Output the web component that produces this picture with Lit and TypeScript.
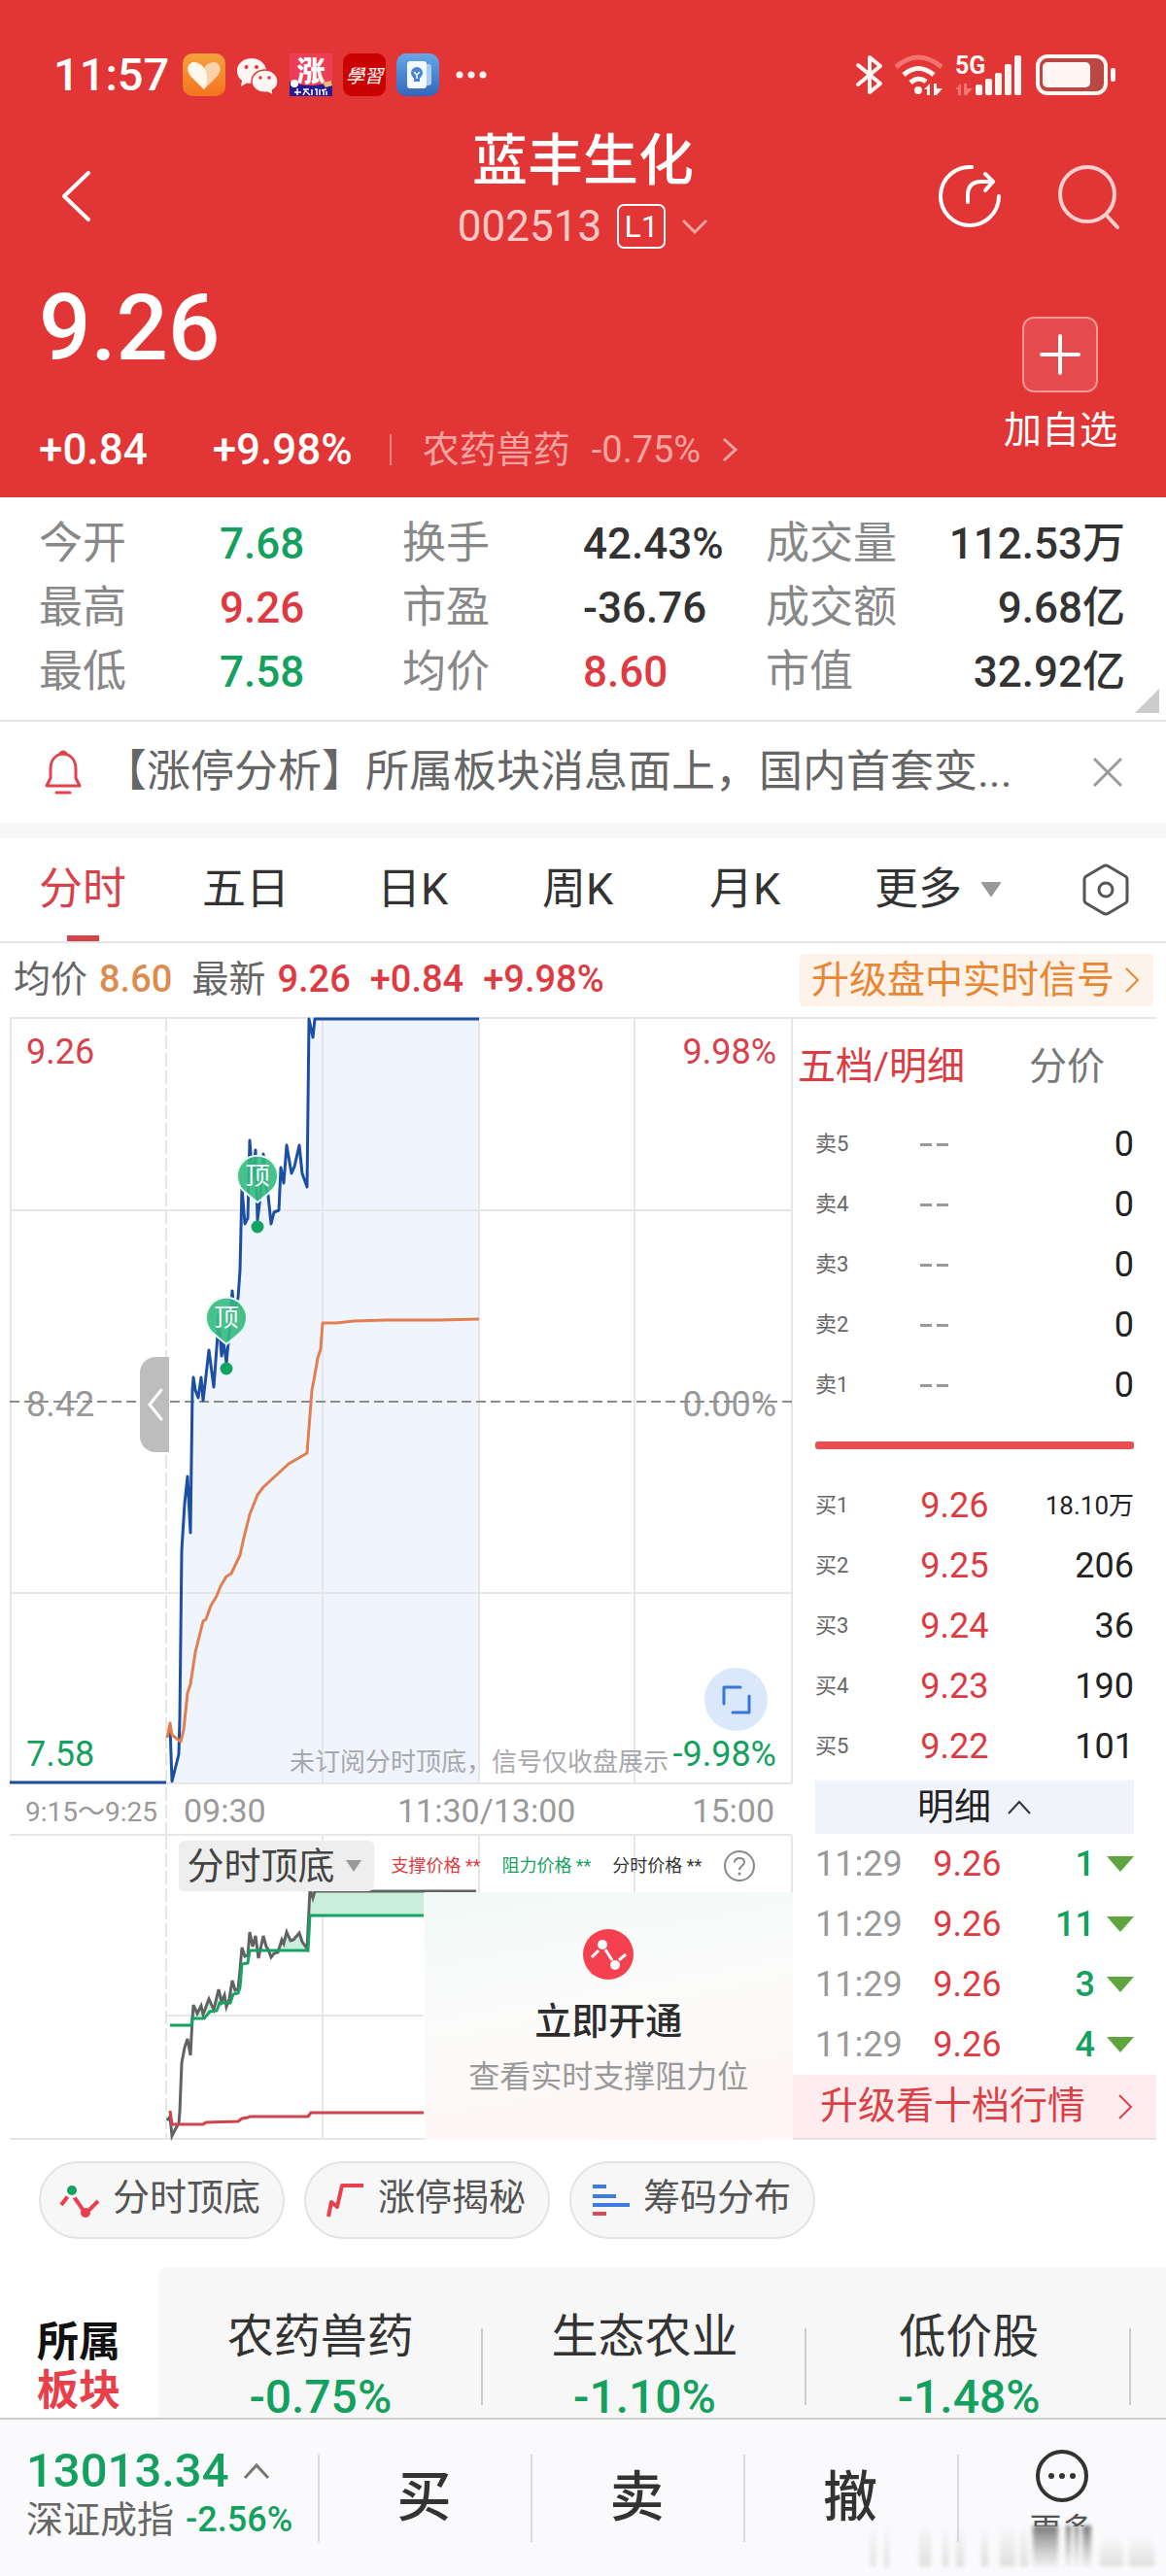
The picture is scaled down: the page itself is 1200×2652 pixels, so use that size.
import { LitElement, html, svg, css } from "lit";
import { customElement, property } from "lit/decorators.js";
import { classMap } from "lit/directives/class-map.js";

const base = css`
  :host {
    display: block;
    font-family: Roboto, "Noto Sans CJK SC", sans-serif;
    line-height: 1.2;
    color: #333;
  }
  * {
    box-sizing: border-box;
  }
  button,
  select {
    font: inherit;
    color: inherit;
    background: none;
    border: 0;
    padding: 0;
    margin: 0;
    cursor: pointer;
  }
  a {
    color: inherit;
    text-decoration: none;
  }
  svg {
    display: block;
    flex: none;
    overflow: visible;
  }
  table {
    width: 100%;
    border-collapse: collapse;
    table-layout: fixed;
  }
  th,
  td {
    padding: 0;
    font-weight: 400;
    text-align: left;
  }
  .up {
    color: #dd3a42;
  }
  .down {
    color: #14a05f;
  }
`;

const PRICE =
  "175,1776 177,1833 181,1817 184,1805 185,1768 187,1595 190,1547 193,1519 196,1577 198,1430 199,1417 201,1430 204,1438 207,1417 209,1441 215,1389 220,1427 224,1373 225,1353 228,1395 230,1380 233,1402 236,1370 239,1328 241,1350 245,1335 247,1307 249,1221 252,1259 255,1253 257,1173 260,1213 263,1183 265,1255 268,1230 271,1187 274,1223 276,1230 279,1259 282,1247 287,1245 289,1201 292,1217 295,1178 300,1207 303,1200 308,1178 311,1207 316,1221 318,1048 322,1067 324,1048 493,1048";
const AVERAGE =
  "172,1788 175,1773 177,1785 182,1789 186,1792 189,1780 193,1742 196,1733 201,1700 209,1668 212,1666 217,1652 223,1642 227,1632 233,1622 238,1619 247,1600 251,1582 257,1558 265,1538 271,1530 283,1519 297,1506 304,1502 316,1495 321,1430 323,1420 327,1397 330,1388 332,1361 346,1361 364,1359 398,1358 452,1358 493,1357";
const SIGNAL_PRICE =
  "172,2182 175,2178 177,2198 181,2190 184,2185 185,2173 187,2123 190,2107 193,2098 196,2115 198,2077 199,2063 203,2072 207,2064 209,2073 215,2057 220,2068 225,2047 228,2060 231,2053 233,2065 236,2057 239,2038 242,2048 245,2047 247,2027 249,2004 252,2013 255,2012 257,1988 260,2003 263,1992 266,2015 271,1992 274,2003 276,2006 279,2014 282,2010 286,2009 290,1996 292,2000 295,1988 299,1997 302,1996 308,1989 311,1998 316,2005 319,1944 322,1953 324,1946 490,1946";
const RESISTANCE =
  "175,2084 197,2084 198,2077 210,2077 216,2070 223,2069 226,2061 237,2061 240,2052 245,2051 247,2045 249,2021 255,2020 257,2007 317,2007 319,1971 436,1971";
const SUPPORT =
  "175,2172 177,2186 209,2186 212,2184 245,2183 249,2180 255,2179 257,2178 317,2178 320,2174 436,2174";

const pin = (x: number, y: number) => svg`
  <path d="M${x} ${y + 28} L${x - 12} ${y + 18} A21 21 0 1 1 ${x + 12} ${y + 18} Z"
    fill="#35ba80" fill-opacity="0.9" stroke="#e9fbf3" stroke-width="2"/>
  <text x=${x} y=${y + 9} class="pin">顶</text>
  <circle cx=${x} cy=${y + 53} r="6.5" fill="#10a362"/>`;

@customElement("intraday-chart")
export class IntradayChart extends LitElement {
  static styles = [
    base,
    css`
      .plot {
        width: 100%;
        height: auto;
      }
      .stack {
        display: grid;
      }
      .stack > * {
        grid-area: 1 / 1;
      }
      .grid {
        stroke: #e6e6e8;
        stroke-width: 2;
        fill: none;
      }
      text {
        font-size: 36px;
      }
      .axis {
        font-size: 34px;
        fill: #999;
      }
      .axis.small {
        font-size: 28px;
      }
      .mid {
        fill: #999;
      }
      .high {
        fill: #d8414b;
      }
      .low {
        fill: #14a05f;
      }
      .end {
        text-anchor: end;
      }
      .pin {
        font-size: 25px;
        fill: #fff;
        text-anchor: middle;
      }
      .remark {
        font-size: 26px;
        fill: #a8a8ac;
      }
      .controls {
        position: relative;
      }
      .handle {
        position: absolute;
        left: 17.6%;
        top: 41.5%;
        width: 30px;
        height: 98px;
        border-radius: 16px 0 0 16px;
        background: #bdbdbd;
        display: grid;
        place-items: center;
      }
      .expand {
        position: absolute;
        left: 88.9%;
        top: 79.5%;
        width: 65px;
        height: 65px;
        border-radius: 50%;
        background: #dbe7fb;
        display: grid;
        place-items: center;
      }
      .over {
        display: flex;
        flex-direction: column;
        align-items: flex-end;
      }
      .legend {
        width: 77.4%;
        height: 58px;
        padding-top: 4px;
        display: flex;
        align-items: center;
        font-size: 18px;
        white-space: nowrap;
      }
      .picker {
        width: 201px;
        height: 52px;
        background: #eee;
        border-radius: 6px;
        display: flex;
        align-items: center;
        padding-left: 8px;
        gap: 8px;
        margin-right: 17px;
      }
      .picker select {
        appearance: none;
        font-size: 38px;
        line-height: 52px;
        width: 156px;
        color: #444;
      }
      .legend span {
        margin-right: 22px;
      }
      .promo {
        width: 46.5%;
        flex: 1;
        display: flex;
        flex-direction: column;
        align-items: center;
        padding-top: 38px;
        background: linear-gradient(170deg, #f1f9f6 0%, #fbfbfa 45%, #fef5f4 100%);
      }
      .promo strong {
        font-size: 38px;
        line-height: 56px;
        font-weight: 500;
        margin-top: 15px;
        color: #2c2c2c;
      }
      .promo small {
        font-size: 32px;
        line-height: 48px;
        margin-top: 5px;
        color: #999;
      }
    `,
  ];

  render() {
    return html`
      <div class="stack">
        <svg class="plot" viewBox="0 1046 816 843" role="img" aria-label="分时走势">
          <polygon points="177,1834 ${PRICE} 493,1834" fill="#eff4fd" />
          <path class="grid" d="M10 1047H816M10 1245H815M10 1639H815M10 1835H815M10 1888H815M11 1047V1835M332 1047V1835M493 1047V1835M653 1047V1835M815 1047V1835" />
          <path class="grid" d="M171 1047V1888" stroke-dasharray="14 4" />
          <text class="mid" x="27" y="1457">8.42</text>
          <text class="mid end" x="799" y="1457">0.00%</text>
          <path d="M10 1442H815" stroke="#8c8c8c" stroke-width="2" stroke-dasharray="10 5" />
          <text class="high" x="27" y="1094">9.26</text>
          <text class="high end" x="799" y="1094">9.98%</text>
          <path d="M10 1834H171" stroke="#1d4d9b" stroke-width="3" />
          <polyline points=${PRICE} fill="none" stroke="#1c4fa3" stroke-width="3" stroke-linejoin="round" />
          <polyline points=${AVERAGE} fill="none" stroke="#e17f50" stroke-width="3" stroke-linejoin="round" />
          ${pin(265, 1209)} ${pin(233, 1355)}
          <text class="low" x="27" y="1817">7.58</text>
          <text class="remark" x="298" y="1822">未订阅分时顶底，信号仅收盘展示</text>
          <text class="low end" x="799" y="1817">-9.98%</text>
          <text class="axis small" x="26" y="1874">9:15～9:25</text>
          <text class="axis" x="189" y="1875">09:30</text>
          <text class="axis" x="409" y="1875">11:30/13:00</text>
          <text class="axis end" x="797" y="1875">15:00</text>
        </svg>
        <div class="controls">
          <button class="handle" aria-label="收起集合竞价">
            <svg width="20" height="36" viewBox="0 0 20 36"><path d="M17 3L5 18L17 33" fill="none" stroke="#fff" stroke-width="3" stroke-linecap="round" /></svg>
          </button>
          <button class="expand" aria-label="全屏">
            <svg width="32" height="32" viewBox="0 0 32 32"><path d="M20 3H3V20M12 29H29V12" fill="none" stroke="#3577d9" stroke-width="3" stroke-linejoin="round" stroke-linecap="round" /></svg>
          </button>
        </div>
      </div>
      <div class="stack">
        <svg class="plot" viewBox="0 1889 816 313" role="img" aria-label="分时顶底走势">
          <path class="grid" d="M10 2201H816M171 2074H436M332 1889V2201M493 1889V1947M653 1889V1950M815 1889V2201" />
          <path class="grid" d="M171 1889V2201" stroke-dasharray="14 4" />
          <polygon points="319,1971 320,1946 436,1946 436,1971" fill="#c9efdc" />
          <polygon points="286,2007 290,1996 295,1988 299,1997 302,1996 308,1989 311,1998 316,2007" fill="#c9efdc" />
          <polygon points="199,2063 209,2073 215,2057 220,2068 225,2047 233,2061 226,2061 216,2070 199,2077" fill="#c9efdc" />
          <polyline points=${SIGNAL_PRICE} fill="none" stroke="#606362" stroke-width="3" />
          <polyline points=${RESISTANCE} fill="none" stroke="#17a162" stroke-width="3" />
          <polyline points=${SUPPORT} fill="none" stroke="#cf434c" stroke-width="3" />
        </svg>
        <div class="over">
          <div class="legend">
            <label class="picker">
              <select aria-label="指标">
                <option>分时顶底</option>
              </select>
              <svg width="16" height="12" viewBox="0 0 16 12"><path d="M0 0H16L8 12Z" fill="#999" /></svg>
            </label>
            <span class="up">支撑价格 **</span>
            <span class="down">阻力价格 **</span>
            <span>分时价格 **</span>
            <button aria-label="说明">
              <svg width="34" height="34" viewBox="0 0 34 34">
                <g fill="none" stroke="#888" stroke-width="2">
                  <circle cx="17" cy="17" r="15" />
                  <path d="M12 13.500Q12 9 17 9T22 13.500C22 16.500 17 17 17 21" />
                </g>
                <circle cx="17" cy="25" r="1.500" fill="#888" />
              </svg>
            </button>
          </div>
          <button class="promo">
            <svg width="52" height="52" viewBox="0 0 52 52">
              <circle cx="26" cy="26" r="26" fill="#f5404f" />
              <path d="M9 29L16 22M23 21L30 32M37 32L44 26" stroke="#fff" stroke-width="3" />
              <circle cx="20" cy="16" r="5" fill="#fff" /><circle cx="33" cy="37" r="5" fill="#fff" />
            </svg>
            <strong>立即开通</strong>
            <small>查看实时支撑阻力位</small>
          </button>
        </div>
      </div>
    `;
  }
}

@customElement("order-book")
export class OrderBook extends LitElement {
  @property({ attribute: false }) bids: [string, string][] = [
    ["9.26", "18.10万"],
    ["9.25", "206"],
    ["9.24", "36"],
    ["9.23", "190"],
    ["9.22", "101"],
  ];
  @property({ attribute: false }) ticks: [string, string, string][] = [
    ["11:29", "9.26", "1"],
    ["11:29", "9.26", "11"],
    ["11:29", "9.26", "3"],
    ["11:29", "9.26", "4"],
  ];

  static styles = [
    base,
    css`
      :host {
        padding-right: 10px;
      }
      .tabs {
        display: flex;
        gap: 66px;
        height: 100px;
        padding-left: 5px;
        align-items: center;
        font-size: 39px;
        border-top: 2px solid #e6e6e8;
      }
      .tabs button {
        color: #777;
        white-space: nowrap;
      }
      .tabs button.up {
        color: #dd3a42;
      }
      .body {
        padding: 0 23px;
      }
      tr {
        height: 62px;
      }
      th,
      td {
        font-size: 36px;
        line-height: 62px;
        white-space: nowrap;
      }
      .book th {
        width: 33%;
        font-size: 22px;
        color: #666;
      }
      .book td:last-child {
        text-align: right;
        color: #222;
      }
      .book .compact {
        font-size: 26px;
      }
      .none {
        display: flex;
        height: 62px;
        align-items: center;
        gap: 5px;
      }
      .none i {
        width: 12px;
        height: 3px;
        background: #999;
      }
      .ratio {
        height: 8px;
        border-radius: 3px;
        background: #e8504f;
        margin: 27px 0;
      }
      .detail {
        width: 100%;
        height: 55px;
        margin-top: 4px;
        background: #f1f3fa;
        display: flex;
        align-items: center;
        justify-content: center;
        gap: 16px;
        font-size: 38px;
        color: #222;
      }
      .ticks .time {
        width: 37%;
        color: #999;
      }
      .ticks .qty {
        width: 34%;
        font-weight: 500;
      }
      .qty div {
        display: flex;
        justify-content: flex-end;
        align-items: center;
        gap: 12px;
      }
      .upgrade {
        height: 67px;
        display: flex;
        align-items: center;
        justify-content: space-between;
        padding: 0 24px 0 28px;
        background: #fdedee;
        color: #dc4047;
        font-size: 39px;
        white-space: nowrap;
        border-bottom: 2px solid #e6dfe0;
      }
    `,
  ];

  render() {
    return html`
      <div class="tabs">
        <button class="up">五档/明细</button>
        <button>分价</button>
      </div>
      <div class="body">
        <table class="book">
          <tbody>
            ${[5, 4, 3, 2, 1].map(
              (n) => html`<tr>
                <th scope="row">卖${n}</th>
                <td><span class="none"><i></i><i></i></span></td>
                <td>0</td>
              </tr>`
            )}
          </tbody>
        </table>
        <div class="ratio"></div>
        <table class="book">
          <tbody>
            ${this.bids.map(
              ([price, qty], i) => html`<tr>
                <th scope="row">买${i + 1}</th>
                <td class="up">${price}</td>
                <td class=${classMap({ compact: qty.length > 5 })}>${qty}</td>
              </tr>`
            )}
          </tbody>
        </table>
        <button class="detail">
          明细
          <svg width="26" height="16" viewBox="0 0 26 16"><path d="M2 14L13 2L24 14" fill="none" stroke="#333" stroke-width="2" /></svg>
        </button>
        <table class="ticks">
          <tbody>
            ${this.ticks.map(
              ([time, price, qty]) => html`<tr>
                <td class="time">${time}</td>
                <td class="up">${price}</td>
                <td class="qty down">
                  <div>${qty}<svg width="28" height="16" viewBox="0 0 28 16"><path d="M0 0H28L14 16Z" fill="#5da53c" /></svg></div>
                </td>
              </tr>`
            )}
          </tbody>
        </table>
      </div>
      <a class="upgrade" href="#level2">
        升级看十档行情
        <svg width="16" height="28" viewBox="0 0 16 28"><path d="M2 2L14 14L2 26" fill="none" stroke="#dc4047" stroke-width="2" /></svg>
      </a>
    `;
  }
}

const statusIcons = html`
  <svg width="44" height="46" viewBox="0 0 44 46">
    <defs><linearGradient id="o" x2="0" y2="1"><stop stop-color="#f6a13c" /><stop offset="1" stop-color="#f5741f" /></linearGradient></defs>
    <rect y="1" width="44" height="44" rx="10" fill="url(#o)" />
    <path d="M22 38L8 24C2 16 7 9 13 10Q19 11 22 16Q25 11 31 10C37 9 42 16 36 24Z" fill="#fbd3ab" />
    <path d="M22 38L8 24C2 16 7 9 13 10Q21 12 24 20Q27 28 22 38Z" fill="#fff6ec" />
  </svg>
  <svg width="44" height="46" viewBox="0 0 44 46">
    <path d="M16 6C7 6 1 12 1 19Q1 25 6 29L5 35L11 31.500Q32 34 31 18C30 11 24 6 16 6Z" fill="#fff5f3" />
    <path d="M30 18C22 18 16 23 16 30C16 37 23 42 32 41L38 44L37.500 39Q43 36 43 30C43 23 37 18 30 18Z" fill="#fff5f3" stroke="#e23535" stroke-width="1.500" />
    <g fill="#e23535"><circle cx="10.500" cy="15" r="2" /><circle cx="21" cy="15" r="2" /><circle cx="25" cy="26" r="1.700" /><circle cx="34" cy="26" r="1.700" /></g>
  </svg>
  <svg width="44" height="46" viewBox="0 0 44 46">
    <rect y="1" width="44" height="44" fill="#ee3d55" />
    <text x="22" y="30" font-size="29" font-weight="900" fill="#fff" text-anchor="middle">涨</text>
    <path d="M0 30Q22 38 44 30V45H0Z" fill="#271b8e" />
    <circle cx="5" cy="32" r="4" fill="#fff" /><path d="M34 31L43 29L44 34L37 36Z" fill="#f7ba77" />
    <path d="M5 41H12M8 37V44M14 38H20M17 38L14 44M17 40L21 44M23 38V44M26 38H28V44M31 38V44M33 39L38 38M35 38V44M38 40V44" stroke="#fff" stroke-width="1.500" fill="none" />
  </svg>
  <svg width="44" height="46" viewBox="0 0 44 46">
    <rect y="1" width="44" height="44" rx="9" fill="#cb0202" />
    <text x="22" y="31" font-size="19" font-style="italic" fill="#fff" text-anchor="middle" font-family="Liberation Serif, Noto Sans CJK TC, serif">學習</text>
  </svg>
  <svg width="44" height="46" viewBox="0 0 44 46">
    <defs><linearGradient id="b" x2="0" y2="1"><stop stop-color="#67a7e8" /><stop offset="1" stop-color="#3167bd" /></linearGradient></defs>
    <rect y="1" width="44" height="44" rx="10" fill="url(#b)" />
    <path d="M27 12H33Q36 12 36 15V31Q36 34 33 34H27Z" fill="#a7ccf5" />
    <rect x="11" y="9" width="20" height="28" rx="3" fill="#f4f9ff" />
    <circle cx="21" cy="21" r="6" fill="#4785d3" /><path d="M18 26H24V30H18Z" fill="#4785d3" />
    <path d="M18 20L21 23L24 20M21 23V27" stroke="#f4f9ff" stroke-width="1.500" fill="none" />
  </svg>
  <svg width="44" height="46" viewBox="0 0 44 46">
    <g fill="#fff3f1"><circle cx="10" cy="23" r="3.500" /><circle cx="22" cy="23" r="3.500" /><circle cx="34" cy="23" r="3.500" /></g>
  </svg>
`;

const radioIcons = html`
  <svg width="28" height="42" viewBox="0 0 28 42">
    <path d="M2 11L25 30L14 39V3L25 12L2 31" fill="none" stroke="#fff6f4" stroke-width="4" stroke-linejoin="round" stroke-linecap="round" />
  </svg>
  <svg width="52" height="42" viewBox="0 0 52 42" fill="none">
    <path d="M2 13Q25 -7 49 13" stroke="#f2736f" stroke-width="5" />
    <path d="M10 21Q25 8 41 21M17 29Q25 22 33 28" stroke="#fff6f4" stroke-width="5" />
    <circle cx="25" cy="37" r="4" fill="#fff6f4" />
    <path d="M31 36L37 30V42H34V36ZM41 30V42H44L50 35H44V30Z" fill="#fff6f4" />
  </svg>
  <svg width="72" height="42" viewBox="0 0 72 42">
    <text x="0" y="20" font-size="25" font-weight="700" fill="#fff6f4">5G</text>
    <path d="M0 36L6 30V42H3V36ZM9 30V42H12L18 35H12V30Z" fill="#f2736f" />
    <g fill="#fff6f4"><rect x="21" y="31" width="7" height="11" rx="2" /><rect x="31" y="25" width="7" height="17" rx="2" /><rect x="41" y="19" width="7" height="23" rx="2" /><rect x="51" y="10" width="7" height="32" rx="2" /><rect x="61" y="1" width="7" height="41" rx="2" /></g>
  </svg>
  <svg width="84" height="42" viewBox="0 0 84 42">
    <rect x="2" y="2" width="70" height="38" rx="10" fill="#b94742" stroke="#fff6f4" stroke-width="4" />
    <rect x="7" y="8" width="49" height="26" rx="5" fill="#fff6f4" /><rect x="77" y="14" width="5" height="14" rx="2" fill="#fff6f4" />
  </svg>
`;

@customElement("app-root")
export class AppRoot extends LitElement {
  static styles = [
    base,
    css`
      :host {
        background: #fff;
      }
      .hero {
        background: #e23535;
        color: #fff;
      }
      .status {
        display: flex;
        align-items: center;
        padding: 54px 50px 0 55px;
        height: 100px;
        gap: 11px;
      }
      .clock {
        font-size: 47px;
        font-weight: 500;
        line-height: 46px;
        margin-right: 3px;
      }
      .push {
        flex: 1;
      }
      .nav {
        display: grid;
        grid-template-columns: 1fr auto 1fr;
        align-items: center;
        padding: 28px 46px 0;
      }
      .back {
        margin-top: 14px;
        padding-left: 14px;
        justify-self: start;
      }
      .tools {
        margin-top: 14px;
        display: flex;
        justify-content: flex-end;
        gap: 57px;
      }
      .title {
        text-align: center;
      }
      h1 {
        margin: 0;
        font-size: 57px;
        line-height: 76px;
        font-weight: 500;
      }
      .code {
        display: flex;
        align-items: center;
        justify-content: center;
        height: 58px;
        gap: 16px;
        font-size: 44px;
        color: #fbc9c7;
      }
      .level {
        width: 50px;
        height: 46px;
        border: 2px solid #fff;
        border-radius: 7px;
        color: #fff;
        font-size: 32px;
        line-height: 42px;
      }
      .quote {
        display: flex;
        justify-content: space-between;
        padding: 28px 50px 26px 40px;
      }
      .price {
        font-size: 94px;
        line-height: 96px;
        font-weight: 500;
      }
      .changes {
        display: flex;
        align-items: center;
        margin-top: 54px;
        font-size: 44px;
        line-height: 46px;
        font-weight: 500;
      }
      .changes span + span {
        margin-left: 67px;
      }
      .sector {
        display: flex;
        align-items: center;
        gap: 22px;
        margin-left: 38px;
        padding-left: 32px;
        border-left: 2px solid #ee8581;
        height: 32px;
        font-size: 38px;
        font-weight: 400;
        color: #f5a5a1;
      }
      .add {
        margin-top: 36px;
        align-self: flex-start;
        display: flex;
        flex-direction: column;
        align-items: center;
        font-size: 39px;
        line-height: 46px;
        gap: 16px;
      }
      .plus {
        width: 78px;
        height: 78px;
        border: 2px solid #f09894;
        border-radius: 12px;
        background: #e54a4c;
        display: grid;
        place-items: center;
      }
      .stats {
        margin: 0;
        padding: 15px 42px 16px 40px;
        display: grid;
        grid-template-columns: 186fr 188fr 186fr 188fr 140fr 230fr;
        grid-auto-rows: 66px;
        font-size: 45px;
        line-height: 66px;
        position: relative;
        border-bottom: 2px solid #e6e6e6;
        white-space: nowrap;
      }
      .stats dt {
        color: #888;
      }
      .stats dd {
        margin: 0;
        font-weight: 500;
        font-size: 44px;
      }
      .stats dd.end {
        text-align: right;
      }
      .corner {
        position: absolute;
        right: 7px;
        bottom: 7px;
      }
      .notice {
        display: flex;
        align-items: center;
        height: 104px;
        padding: 0 44px 0 46px;
      }
      .notice a {
        flex: 1;
        margin-left: 22px;
        font-size: 45px;
        color: #666;
        white-space: nowrap;
      }
      .band {
        height: 16px;
        background: #f7f7f7;
      }
      .periods {
        display: grid;
        grid-template-columns: 168fr 180fr 170fr 172fr 170fr 214fr 48px;
        align-items: center;
        padding: 0 38px 0 40px;
        height: 108px;
        font-size: 45px;
        border-bottom: 2px solid #e6e6e6;
      }
      .periods button {
        justify-self: start;
        height: 106px;
        display: flex;
        align-items: center;
        gap: 18px;
        white-space: nowrap;
      }
      .periods .on {
        color: #d9404a;
        background: linear-gradient(#d4424a, #d4424a) center bottom / 33px 6px no-repeat;
      }
      .summary {
        display: flex;
        align-items: center;
        height: 76px;
        padding: 0 13px 0 14px;
        font-size: 38px;
        white-space: nowrap;
        color: #666;
      }
      .summary b {
        font-weight: 500;
        margin: 0 20px 0 12px;
      }
      .summary b.plain {
        margin: 0 20px 0 0;
      }
      .avg {
        color: #dd8b4f;
      }
      .live {
        margin-left: auto;
        height: 54px;
        padding: 0 14px 0 12px;
        display: flex;
        align-items: center;
        gap: 10px;
        font-size: 39px;
        background: #fef3ea;
        color: #e98632;
        border-radius: 4px;
      }
      .board {
        display: grid;
        grid-template-columns: 816fr 384fr;
        align-items: start;
      }
      .pills {
        display: flex;
        gap: 20px;
        padding: 22px 40px 29px;
      }
      .pills button {
        display: flex;
        align-items: center;
        gap: 13px;
        height: 80px;
        width: 253px;
        padding: 0 0 4px 19px;
        border: 2px solid #e4e4e4;
        border-radius: 40px;
        background: #f7f7f7;
        font-size: 38px;
        color: #555;
        white-space: nowrap;
      }
      .sectors {
        display: grid;
        grid-template-columns: 163px 1fr 1fr 1fr 36px;
        height: 155px;
      }
      .sectors h2 {
        margin: 0;
        padding: 52px 0 0 38px;
        font-size: 43px;
        line-height: 50px;
        font-weight: 700;
        color: #111;
      }
      .sectors h2 span {
        display: block;
      }
      .sectors h2 .up {
        color: #e8404a;
      }
      .item {
        padding-top: 42px;
        text-align: center;
        background: linear-gradient(#ccc, #ccc) right 63px / 2px 79px no-repeat #f7f7f7;
        font-size: 48px;
        line-height: 60px;
        white-space: nowrap;
      }
      .item:nth-child(2) {
        border-top-left-radius: 10px;
      }
      .item span {
        display: block;
        line-height: 40px;
        margin-top: 12px;
        font-weight: 500;
      }
      .fill {
        background: #f7f7f7;
      }
      .bar {
        position: relative;
        display: grid;
        grid-template-columns: 327fr 219fr 219fr 220fr 215fr;
        background: #fafafc;
        border-top: 2px solid #ccc;
      }
      .bar > a,
      .bar > button {
        height: 161px;
        white-space: nowrap;
      }
      .bar > .deal,
      .bar > .more {
        background: linear-gradient(#dcdcde, #dcdcde) left 36px / 2px 90px no-repeat;
      }
      .deal {
        font-size: 56px;
        font-weight: 500;
      }
      .index {
        padding: 26px 0 0 27px;
      }
      .index div {
        display: flex;
        align-items: center;
        gap: 14px;
        font-size: 49px;
        line-height: 54px;
        font-weight: 500;
      }
      .index p {
        margin: 0;
        display: flex;
        gap: 12px;
        font-size: 38px;
        line-height: 46px;
        color: #666;
      }
      .index p span {
        font-size: 36px;
        font-weight: 500;
      }
      .bar > .more {
        display: flex;
        flex-direction: column;
        align-items: center;
        padding-top: 30px;
        font-size: 33px;
        line-height: 40px;
        gap: 8px;
        color: #555;
      }
      .smear {
        position: absolute;
        right: 8px;
        bottom: 10px;
        pointer-events: none;
      }
      .soft {
        filter: blur(2px);
      }
    `,
  ];

  private stats: [string, string, string][] = [
    ["今开", "7.68", "down"],
    ["换手", "42.43%", ""],
    ["成交量", "112.53万", "end"],
    ["最高", "9.26", "up"],
    ["市盈", "-36.76", ""],
    ["成交额", "9.68亿", "end"],
    ["最低", "7.58", "down"],
    ["均价", "8.60", "up"],
    ["市值", "32.92亿", "end"],
  ];
  private sectors: [string, string][] = [
    ["农药兽药", "-0.75%"],
    ["生态农业", "-1.10%"],
    ["低价股", "-1.48%"],
  ];

  render() {
    return html`
      <header class="hero">
        <div class="status">
          <span class="clock">11:57</span>
          ${statusIcons}
          <span class="push"></span>
          ${radioIcons}
        </div>
        <div class="nav">
          <button class="back" aria-label="返回">
            <svg width="36" height="56" viewBox="0 0 36 56"><path d="M31 4L6 28L31 52" fill="none" stroke="#fff" stroke-width="4" stroke-linecap="round" stroke-linejoin="round" /></svg>
          </button>
          <div class="title">
            <h1>蓝丰生化</h1>
            <div class="code">
              002513<span class="level">L1</span>
              <svg width="28" height="16" viewBox="0 0 28 16"><path d="M2 2L14 14L26 2" fill="none" stroke="#f5a5a1" stroke-width="3" /></svg>
            </div>
          </div>
          <div class="tools">
            <button aria-label="分享">
              <svg width="66" height="66" viewBox="0 0 66 66" fill="none" stroke="#fff" stroke-width="4" stroke-linecap="round" stroke-linejoin="round">
                <path d="M35 3A30 30 0 1 0 63 33" /><path d="M31 39V32Q31 18 45 18H57M49 10L57 18L49 27" />
              </svg>
            </button>
            <button aria-label="搜索">
              <svg width="66" height="66" viewBox="0 0 66 66" fill="none" stroke="#fbd0ce" stroke-width="4" stroke-linecap="round">
                <circle cx="31" cy="31" r="28" /><path d="M52 54L62 65" />
              </svg>
            </button>
          </div>
        </div>
        <div class="quote">
          <div>
            <div class="price">9.26</div>
            <div class="changes">
              <span>+0.84</span><span>+9.98%</span>
              <a class="sector" href="#sector">农药兽药 <data value="-0.75">-0.75%</data>
                <svg width="16" height="26" viewBox="0 0 16 26"><path d="M2 2L14 13L2 24" fill="none" stroke="#f5a5a1" stroke-width="3" /></svg>
              </a>
            </div>
          </div>
          <button class="add">
            <span class="plus"><svg width="40" height="40" viewBox="0 0 40 40"><path d="M20 1V39M1 20H39" stroke="#fff" stroke-width="4" stroke-linecap="round" /></svg></span>
            加自选
          </button>
        </div>
      </header>

      <dl class="stats">
        ${this.stats.map(([k, v, c]) => html`<dt>${k}</dt><dd class=${c}>${v}</dd>`)}
        <svg class="corner" width="25" height="25" viewBox="0 0 25 25"><path d="M25 0V25H0Z" fill="#ccc" /></svg>
      </dl>

      <div class="notice">
        <svg width="38" height="46" viewBox="0 0 38 46" fill="none" stroke="#e2434b" stroke-width="3" stroke-linecap="round" stroke-linejoin="round">
          <path d="M15 5Q19 -1 23 5M19 4C9 5 6 13 6 20V29L2 37H36L32 29V20C32 13 29 5 19 4ZM12 44H26" />
        </svg>
        <a href="#notice">【涨停分析】所属板块消息面上，国内首套变...</a>
        <button aria-label="关闭">
          <svg width="32" height="32" viewBox="0 0 32 32"><path d="M2 2L30 30M30 2L2 30" stroke="#999" stroke-width="3" /></svg>
        </button>
      </div>
      <div class="band"></div>

      <nav class="periods">
        <button class="on">分时</button>
        <button>五日</button>
        <button>日K</button>
        <button>周K</button>
        <button>月K</button>
        <button>更多<svg width="24" height="16" viewBox="0 0 24 16"><path d="M3 1H21L12 14Z" fill="#999" stroke="#999" stroke-width="2" stroke-linejoin="round" /></svg></button>
        <button aria-label="设置">
          <svg width="48" height="54" viewBox="0 0 48 54" fill="none" stroke="#555" stroke-width="3" stroke-linejoin="round">
            <path d="M21 3Q24 1 27 3L44 13Q46 14 46 17V37Q46 40 44 41L27 51Q24 53 21 51L4 41Q2 40 2 37V17Q2 14 4 13Z" /><circle cx="24" cy="27" r="7" />
          </svg>
        </button>
      </nav>

      <div class="summary">
        均价<b class="avg">8.60</b>最新<b class="up">9.26</b><b class="up plain">+0.84</b><b class="up plain">+9.98%</b>
        <a class="live" href="#signal">升级盘中实时信号<svg width="16" height="28" viewBox="0 0 16 28"><path d="M2 2L14 14L2 26" fill="none" stroke="#e98632" stroke-width="2" /></svg></a>
      </div>

      <main class="board">
        <intraday-chart></intraday-chart>
        <order-book></order-book>
      </main>

      <div class="pills">
        <button>
          <svg width="42" height="42" viewBox="0 0 42 42"><path d="M2 28L12 15L27 37L40 24" fill="none" stroke="#e8404f" stroke-width="4" /><circle cx="13" cy="13" r="8" fill="#f7f7f7" /><circle cx="13" cy="13" r="5" fill="#14a05f" /><circle cx="27" cy="36" r="5" fill="#e8404f" /></svg>
          分时顶底
        </button>
        <button>
          <svg width="42" height="42" viewBox="0 0 42 42"><path d="M4 40L7 25L13 30L18 8H40" fill="none" stroke="#e8404f" stroke-width="4" stroke-linejoin="round" /></svg>
          涨停揭秘
        </button>
        <button>
          <svg width="42" height="42" viewBox="0 0 42 42"><path d="M3 9H17M3 19H27M3 28H41" stroke="#3e7de0" stroke-width="4" /><path d="M3 37H17" stroke="#d84a55" stroke-width="4" /></svg>
          筹码分布
        </button>
      </div>

      <section class="sectors">
        <h2><span>所属</span><span class="up">板块</span></h2>
        ${this.sectors.map(([name, pct]) => html`<a class="item" href="#sector">${name}<span class="down">${pct}</span></a>`)}
        <div class="fill"></div>
      </section>

      <footer class="bar">
        <a class="index" href="#index">
          <div class="down">13013.34<svg width="28" height="18" viewBox="0 0 28 18"><path d="M2 16L14 3L26 16" fill="none" stroke="#777" stroke-width="3" /></svg></div>
          <p>深证成指<span class="down">-2.56%</span></p>
        </a>
        <button class="deal">买</button>
        <button class="deal">卖</button>
        <button class="deal">撤</button>
        <button class="more">
          <svg width="56" height="56" viewBox="0 0 56 56"><circle cx="28" cy="28" r="25" fill="none" stroke="#333" stroke-width="4" /><g fill="#333"><circle cx="17" cy="28" r="3" /><circle cx="28" cy="28" r="3" /><circle cx="39" cy="28" r="3" /></g></svg>
          更多
        </button>
        <svg class="smear" width="300" height="42" viewBox="0 0 300 42" aria-hidden="true">
          <defs>
            <linearGradient id="d" x2="0" y2="1"><stop stop-color="#666" stop-opacity="0.9" /><stop offset="1" stop-color="#aaa" stop-opacity="0.15" /></linearGradient>
            <linearGradient id="l" x2="0" y2="1"><stop stop-color="#ccc" stop-opacity="0" /><stop offset="1" stop-color="#ccc" stop-opacity="0.6" /></linearGradient>
          </defs>
          <rect x="160" y="1" width="80" height="41" fill="#fafafc" />
          <g class="soft">
            <g fill="url(#l)"><rect x="4" width="5" height="42" /><rect x="18" width="5" height="42" /><rect x="54" width="12" height="42" /><rect x="78" width="6" height="42" /><rect x="92" width="8" height="42" /><rect x="118" width="7" height="42" /><rect x="137" width="16" height="42" /><rect x="158" width="8" height="42" /><rect x="240" y="12" width="24" height="30" /><rect x="270" y="12" width="26" height="30" /></g>
            <g fill="url(#d)"><rect x="171" width="26" height="42" /><rect x="205" width="5" height="42" /><rect x="214" width="4" height="42" /><rect x="222" width="9" height="42" /></g>
          </g>
        </svg>
      </footer>
    `;
  }
}
